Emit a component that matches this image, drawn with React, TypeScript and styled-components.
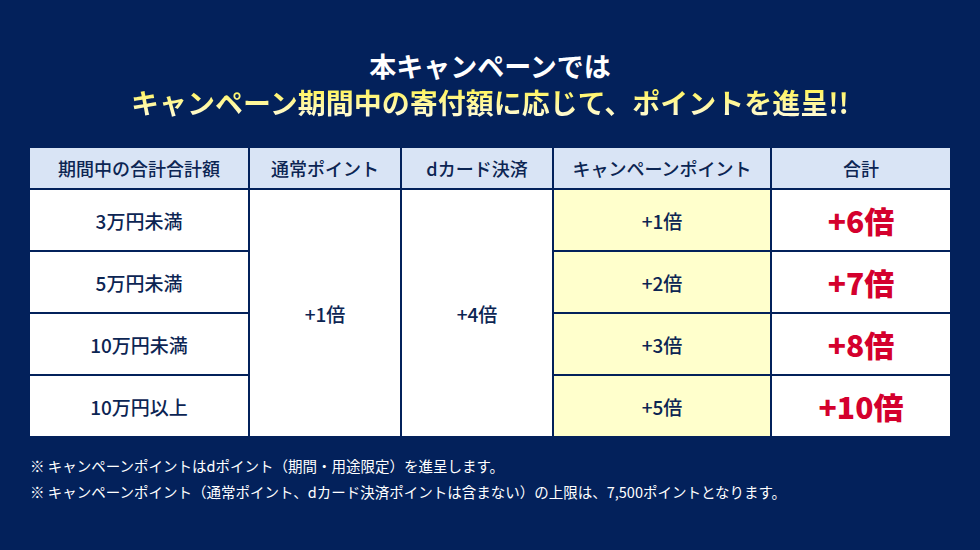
import React from "react";
import styled, { createGlobalStyle } from "styled-components";

const Global = createGlobalStyle`
  html, body { margin: 0; padding: 0; background: #03215b; }
  body { font-family: "Noto Sans CJK JP", "Noto Sans", sans-serif; }
`;

const Page = styled.div`
  width: 980px;
  height: 550px;
  background: #03215b;
  box-sizing: border-box;
  padding: 48px 30px 0;
  display: flex;
  flex-direction: column;
  align-items: stretch;
`;

const Title = styled.div`
  display: flex;
  flex-direction: column;
  align-items: center;
  font-weight: 700;
  line-height: 36px;
  height: 100px;
`;

const TitleLine = styled.div<{ $accent?: boolean }>`
  font-size: ${(p) => (p.$accent ? "28px" : "27px")};
  color: #ffffff;
  ${(p) =>
    p.$accent &&
    `
    background: linear-gradient(180deg, #fff45a 15%, #fffbe0 95%);
    -webkit-background-clip: text;
    background-clip: text;
    color: transparent;
  `}
`;

const Table = styled.div`
  display: grid;
  grid-template-columns: 218px 150px 150px 216px 178px;
  grid-template-rows: 40px 60px 60px 60px 60px;
  gap: 2px;
  background: #03215b;
  color: #0c2553;
`;

const Cell = styled.div<{ $bg?: string; $rows?: number }>`
  background: ${(p) => p.$bg || "#ffffff"};
  display: flex;
  align-items: center;
  justify-content: center;
  font-size: 19px;
  font-weight: 500;
  ${(p) => (p.$rows ? `grid-row: span ${p.$rows};` : "")}
`;

const Head = styled(Cell)`
  background: #d9e4f5;
  font-size: 18px;
  font-weight: 500;
`;

const Total = styled(Cell)`
  color: #d4002d;
  font-size: 30px;
  font-weight: 900;
`;

const Notes = styled.div`
  margin-top: 17px;
  color: #ffffff;
  font-size: 14.5px;
  line-height: 26px;
`;

const rows = [
  { amount: "3万円未満", camp: "+1倍", total: "+6倍" },
  { amount: "5万円未満", camp: "+2倍", total: "+7倍" },
  { amount: "10万円未満", camp: "+3倍", total: "+8倍" },
  { amount: "10万円以上", camp: "+5倍", total: "+10倍" },
];

export default function App() {
  return (
    <Page>
      <Global />
      <Title>
        <TitleLine>本キャンペーンでは</TitleLine>
        <TitleLine $accent>キャンペーン期間中の寄付額に応じて、ポイントを進呈!!</TitleLine>
      </Title>
      <Table>
        <Head>期間中の合計合計額</Head>
        <Head>通常ポイント</Head>
        <Head>dカード決済</Head>
        <Head>キャンペーンポイント</Head>
        <Head>合計</Head>
        {rows.map((r, i) => (
          <React.Fragment key={r.amount}>
            <Cell>{r.amount}</Cell>
            {i === 0 && (
              <>
                <Cell $rows={4}>+1倍</Cell>
                <Cell $rows={4}>+4倍</Cell>
              </>
            )}
            <Cell $bg="#ffffcc">{r.camp}</Cell>
            <Total>{r.total}</Total>
          </React.Fragment>
        ))}
      </Table>
      <Notes>
        <div>※ キャンペーンポイントはdポイント（期間・用途限定）を進呈します。</div>
        <div>※ キャンペーンポイント（通常ポイント、dカード決済ポイントは含まない）の上限は、7,500ポイントとなります。</div>
      </Notes>
    </Page>
  );
}
